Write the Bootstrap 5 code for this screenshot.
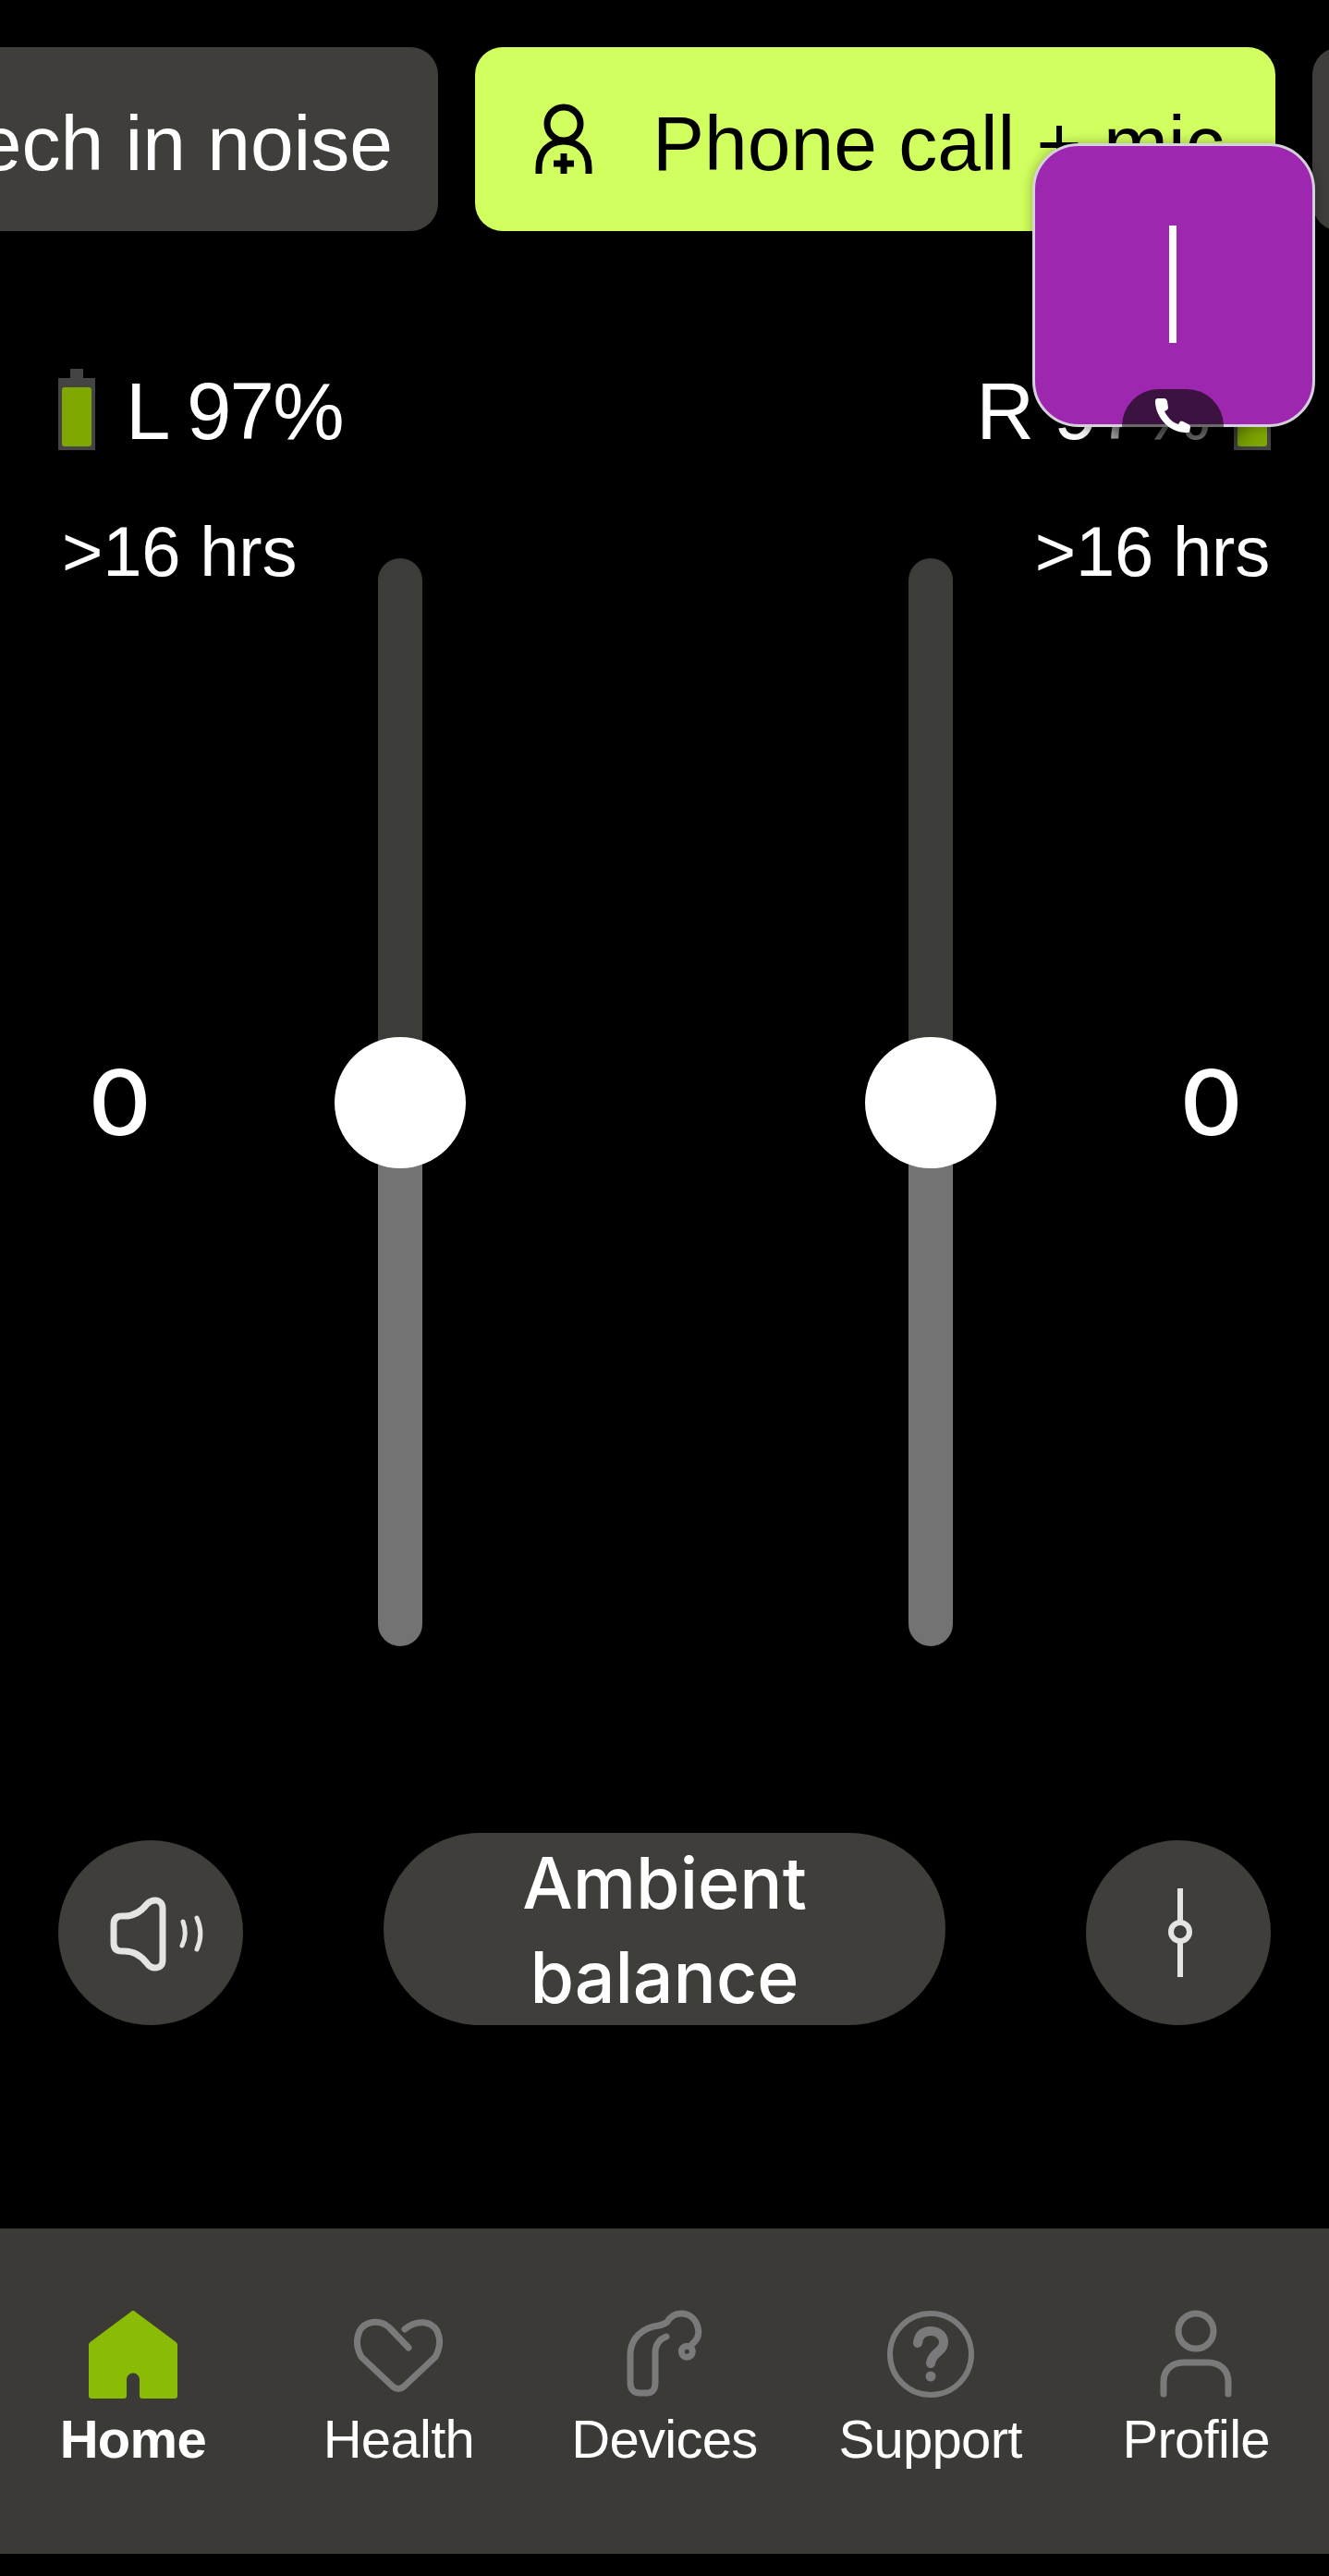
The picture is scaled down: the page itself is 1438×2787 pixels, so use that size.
<!DOCTYPE html>
<html lang="en">
<head>
    <meta charset="UTF-8">
    <meta name="viewport" content="width=device-width, initial-scale=1.0">
    <title>Home</title>
    <link href="https://cdn.jsdelivr.net/npm/bootstrap@5.3.0/dist/css/bootstrap.min.css" rel="stylesheet">
    <style>
        body {
            background: #000;
            color: #fff;
            font-family: "Liberation Sans", Arial, sans-serif;
            height: 2787px;
            overflow: hidden;
            position: relative;
        }
        .chip-row { padding-top: 51px; height: 250px; overflow: hidden; gap: 40px; }
        .chip {
            height: 199px;
            border-radius: 30px;
            background: #3f3e3a;
            flex: none;
            font-size: 84px;
            white-space: nowrap;
            padding-top: 8px;
        }
        .chip-off { width: 640px; margin-left: -166px; padding-right: 49px; }
        .chip-on { width: 866px; background: #d2ff60; color: #000; padding-left: 65px; gap: 65px; }
        .chip-on svg { margin-bottom: 10px; }
        .chip-next { width: 200px; }
        .batt-row { margin-top: 149px; padding: 0 63px; height: 88px; }
        .batt-text { font-size: 87px; line-height: 88px; letter-spacing: -1.7px; padding-top: 2px; }
        .batt-gap { gap: 33px; }
        .batt-gap-r { gap: 26px; }
        .hours-row { margin-top: 65px; padding: 0 64px 0 67px; font-size: 76px; line-height: 90px; letter-spacing: -.2px; }
        .slider-area { height: 1177px; margin-top: -38px; padding-left: 409px; padding-right: 407px; }
        .track { width: 48px; height: 1177px; border-radius: 24px; overflow: hidden; }
        .track-top { height: 589px; background: #3c3c38; }
        .track-bottom { height: 588px; background: #737373; }
        .thumb-holder { position: relative; width: 48px; height: 1177px; }
        .thumb {
            position: absolute; left: -47px; top: 518px;
            width: 142px; height: 142px; border-radius: 50%; background: #fff;
        }
        .level {
            position: absolute; top: 546px; font-family: Inter, sans-serif;
            font-weight: 500; font-size: 98px; line-height: 86px; transform: scaleX(1.08);
        }
        .level-l { left: -311px; }
        .level-r { left: 296px; }
        .ctrl-row { margin-top: 202px; padding: 0 63px; height: 208px; }
        .round-btn { width: 200px; height: 200px; border-radius: 50%; background: #3f3e3a; margin-top: 8px; }
        .pill-btn {
            width: 608px; height: 208px; border-radius: 104px; background: #3f3e3a;
            font-family: Inter, sans-serif; font-weight: 500; font-size: 77px; line-height: 102px;
            text-align: center; padding-top: 3px;
        }
        .tab-bar { height: 352px; background: #3b3a37; padding-top: 88px; margin-top: 220px; }
        .tab-item { width: 20%; }
        .tab-icon { height: 108px; }
        .tab-label { font-size: 58px; line-height: 64px; letter-spacing: -.7px; }
        .pip {
            position: absolute; left: 1117px; top: 155px; width: 306px; height: 307px;
            background: #9d27af; border: 3px solid #d6d0dc; border-radius: 50px;
            box-shadow: 0 0 14px rgba(0,0,0,.3);
        }
        .pip-bar { width: 8px; height: 127px; background: #fff; margin-top: 86px; margin-right: 2px; }
        .pip-tab {
            position: absolute; left: 94px; bottom: -3px; width: 110px; height: 41px;
            background: #3b1240; border-radius: 40px 40px 0 0; border-bottom: 3px solid #6a6a6a;
        }
        .pip-call { position: absolute; left: 36px; top: 10px; overflow: visible; }
        .pip-glow {
            position: absolute; left: 1190px; top: 420px; width: 150px; height: 74px;
            background: rgba(0,0,0,.75); filter: blur(16px); border-radius: 50%;
        }
    </style>
</head>
<body>
    <div class="chip-row d-flex">
        <div class="chip chip-off d-flex align-items-center justify-content-end">Speech in noise</div>
        <div class="chip chip-on d-flex align-items-center">
            <svg width="62" height="76" viewBox="0 0 62 76" fill="none" stroke="#000" stroke-width="7">
                <circle cx="31" cy="22" r="18"/>
                <path d="M4 76V70C4 52 15 41 31 41S58 52 58 70V76"/>
                <path d="M31 54V76M20 65H42"/>
            </svg>
            <span>Phone call + mic</span>
        </div>
        <div class="chip chip-next"></div>
    </div>

    <div class="batt-row d-flex justify-content-between">
        <div class="d-flex batt-gap">
            <svg width="40" height="88" viewBox="0 0 40 88">
                <path d="M13 0H27V10H40V88H0V10H13Z" fill="#444"/>
                <rect x="4" y="20" width="32" height="64" rx="3" fill="#7fa800"/>
            </svg>
            <div class="batt-text">L 97%</div>
        </div>
        <div class="d-flex batt-gap-r">
            <div class="batt-text">R 97%</div>
            <svg width="40" height="88" viewBox="0 0 40 88">
                <path d="M13 0H27V10H40V88H0V10H13Z" fill="#444"/>
                <rect x="4" y="20" width="32" height="64" rx="3" fill="#7fa800"/>
            </svg>
        </div>
    </div>

    <div class="hours-row d-flex justify-content-between">
        <div>&gt;16 hrs</div>
        <div>&gt;16 hrs</div>
    </div>

    <div class="slider-area d-flex justify-content-between">
        <div class="thumb-holder">
            <div class="track"><div class="track-top"></div><div class="track-bottom"></div></div>
            <div class="thumb"></div>
            <div class="level level-l">0</div>
        </div>
        <div class="thumb-holder">
            <div class="track"><div class="track-top"></div><div class="track-bottom"></div></div>
            <div class="thumb"></div>
            <div class="level level-r">0</div>
        </div>
    </div>

    <div class="ctrl-row d-flex justify-content-between">
        <div class="round-btn d-flex align-items-center justify-content-center">
            <svg class="ms-1 mt-2" width="130" height="110" viewBox="0 0 130 110" fill="none" stroke="#e4e4e0" stroke-linecap="round" stroke-linejoin="round">
                <path stroke-width="7" d="M68 16C73 16 76 20 76 25V81C76 86 73 89 68 89C64 89 61 87 59 84C52 75 44 71 35 71H32C26 71 23 68 23 62V42C23 36 26 33 32 33H35C44 33 52 29 59 20C61 18 64 16 68 16Z"/>
                <path stroke-width="5" d="M98 39C101 47 101 57 97 65M113 35C118 46 118 58 113 69"/>
            </svg>
        </div>
        <div class="pill-btn">Ambient<br>balance</div>
        <div class="round-btn d-flex align-items-center justify-content-center">
            <svg class="ms-1" width="30" height="96" viewBox="0 0 30 96" fill="none" stroke="#e4e4e0" stroke-width="6">
                <circle cx="15" cy="47" r="10"/>
                <path d="M15 0V37M15 57V96"/>
            </svg>
        </div>
    </div>

    <div class="tab-bar d-flex">
        <div class="tab-item text-center">
            <div class="tab-icon d-flex justify-content-center">
                <svg width="96" height="96" viewBox="0 0 96 96">
                    <path d="M46.5 1.5Q48 0 49.5 1.5L94.5 35Q96 36.5 96 38V93Q96 96 93 96H58Q55 96 55 93V76C55 66 41 66 41 76V93Q41 96 38 96H3Q0 96 0 93V38Q0 36.5 1.5 35Z" fill="#8abb05"/>
                </svg>
            </div>
            <div class="tab-label fw-bold">Home</div>
        </div>
        <div class="tab-item text-center">
            <div class="tab-icon d-flex justify-content-center">
                <svg width="96" height="96" viewBox="0 0 96 96" fill="none" stroke="#7a7a7a" stroke-width="7" stroke-linecap="round" stroke-linejoin="round">
                    <path d="M59 41L38 19C28 10 12 12 6 23C2 32 3 42 8 51L42 83Q48 88 54 83L88 51C93 42 94 32 90 23C84 12 68 10 55 21"/>
                </svg>
            </div>
            <div class="tab-label">Health</div>
        </div>
        <div class="tab-item text-center">
            <div class="tab-icon d-flex justify-content-center">
                <svg width="92" height="96" viewBox="14 14 92 96" fill="none" stroke="#7a7a7a" stroke-width="7" stroke-linecap="round" stroke-linejoin="round">
                    <path d="M90 51C96 46 98 40 96 33C94 24 87 18 78 18C71 18 66 22 63 27C61 29 58 30 54 31C36 33 23 45 23 63V93C23 100 27 104 33 104H41C47 104 50 100 50 93V60C50 52 54 46 62 43"/>
                    <circle cx="84.3" cy="59.3" r="6"/>
                </svg>
            </div>
            <div class="tab-label">Devices</div>
        </div>
        <div class="tab-item text-center">
            <div class="tab-icon d-flex justify-content-center">
                <svg width="96" height="96" viewBox="0 0 96 96" fill="none" stroke="#7a7a7a" stroke-width="6">
                    <circle cx="48" cy="48" r="44"/>
                    <path d="M34 36C35 26 41 23 48 23C57 23 62 29 62 35C62 46 49 46 48 58" stroke-width="10" stroke-linecap="round"/>
                    <circle cx="48" cy="72" r="5.5" fill="#7a7a7a" stroke="none"/>
                </svg>
            </div>
            <div class="tab-label">Support</div>
        </div>
        <div class="tab-item text-center">
            <div class="tab-icon d-flex justify-content-center">
                <svg width="78" height="96" viewBox="0 0 78 96" fill="none" stroke="#7a7a7a" stroke-width="7" stroke-linecap="round">
                    <circle cx="39" cy="23" r="19"/>
                    <path d="M4 91V78C4 65 13 57 26 57H52C65 57 74 65 74 78V91"/>
                </svg>
            </div>
            <div class="tab-label">Profile</div>
        </div>
    </div>

    <div class="pip-glow"></div>
    <div class="pip d-flex justify-content-center">
        <div class="pip-bar"></div>
        <div class="pip-tab">
            <svg class="pip-call" width="40" height="40" viewBox="0 0 40 40">
                <path d="M0 3Q0 0 3 0H10Q12 0 13 3L14 10Q14 12 12 13L10 14C13 20 18 26 25 28L27 25Q28 24 30 25L36 28Q38 29 38 31L37 36Q37 37 33 37C15 37 0 20 0 3Z" fill="#fff"/>
            </svg>
        </div>
    </div>

    <script src="https://cdn.jsdelivr.net/npm/bootstrap@5.3.0/dist/js/bootstrap.bundle.min.js"></script>
</body>
</html>
